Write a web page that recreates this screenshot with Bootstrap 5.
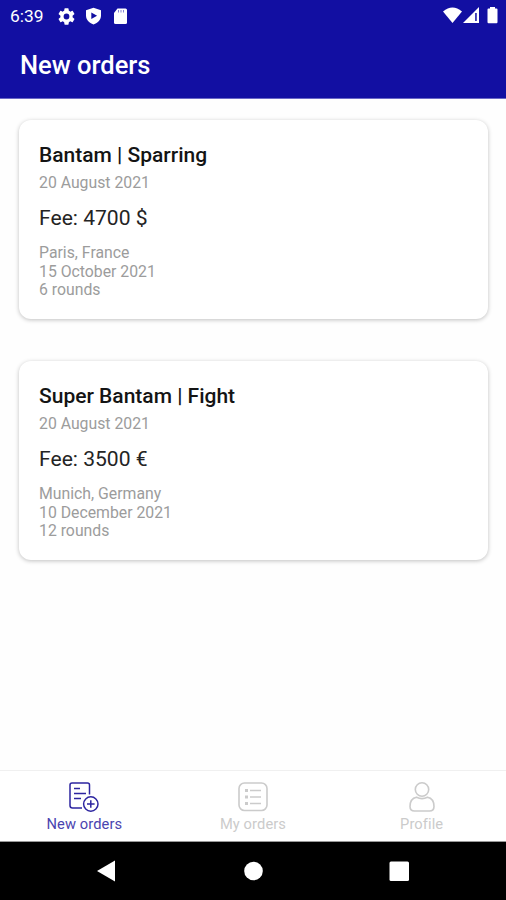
<!DOCTYPE html>
<html lang="en">
<head>
<meta charset="utf-8">
<meta name="viewport" content="width=device-width, initial-scale=1">
<title>New orders</title>
<link href="https://cdn.jsdelivr.net/npm/bootstrap@5.3.0/dist/css/bootstrap.min.css" rel="stylesheet">
<style>
body{font-family:Roboto,"Liberation Sans",sans-serif;background:#fefefe;color:#111}
.app-screen{height:900px}
.app-header{height:99px;background:#120fa2;border-bottom:1px solid #6a68c6}
.status-bar{height:32px;padding:0 8px 0 10px}
.clock{font-size:17.4px;line-height:32px;width:48px}
.app-title{font-size:25.5px;font-weight:500;line-height:30px;padding:18px 20px 0}
.order-list{padding:21px 18px 0 19px;gap:42px}
.order-card{height:199px;border:0;border-radius:12px;background:#fff;padding:23px 20px 0;box-shadow:0 1px 4px rgba(0,0,0,.25)}
.order-name{font-size:21px;font-weight:500;line-height:25px;color:#141414}
.order-meta{font-size:15.8px;line-height:18.8px;color:#9c9c9c}
.order-date{margin-top:5.5px}
.order-fee{font-size:21.1px;line-height:26px;margin:12.5px 0 13px;color:#242424}
.tab-bar{height:72px;border-top:1px solid #f0f0f0;border-bottom:1px solid #999}
.tab-link{padding-top:10px;color:#cbcbcb;font-size:14.7px;line-height:18px;letter-spacing:.1px}
.tab-link.active{color:#4b44b0}
.tab-link svg{margin-bottom:2px}
.system-nav{height:58px;background:#000}
</style>
</head>
<body>
<div class="app-screen d-flex flex-column overflow-hidden">
<header class="app-header text-white flex-shrink-0">
  <div class="status-bar d-flex align-items-center">
    <span class="clock">6:39</span>
    <svg width="17" height="17" viewBox="2 2 20 20" fill="#fff"><path d="M19.14 12.94c.04-.3.06-.61.06-.94s-.02-.64-.07-.94l2.03-1.58a.5.5 0 0 0 .12-.61l-1.92-3.32a.5.5 0 0 0-.59-.22l-2.39.96a7 7 0 0 0-1.62-.94l-.36-2.54A.5.5 0 0 0 13.92 2.4h-3.84a.5.5 0 0 0-.47.41l-.36 2.54a7 7 0 0 0-1.63.94l-2.39-.96a.5.5 0 0 0-.59.22L2.74 8.87a.5.5 0 0 0 .12.61l2.03 1.58a7 7 0 0 0 0 1.88l-2.03 1.58a.5.5 0 0 0-.12.61l1.92 3.32c.12.22.37.29.59.22l2.39-.96c.5.38 1.03.7 1.62.94l.36 2.54c.05.24.24.41.48.41h3.84c.24 0 .44-.17.47-.41l.36-2.54a7 7 0 0 0 1.62-.94l2.39.96c.22.08.47 0 .59-.22l1.92-3.32a.5.5 0 0 0-.12-.61zM12 15.4a3.4 3.4 0 1 1 0-6.8 3.4 3.4 0 0 1 0 6.8"/></svg>
    <svg class="ms-2" width="20" height="18" viewBox="0 0 20 18"><path fill="#fff" d="M10.500.7l7.500 2.600v5.200c0 4.100-3 7.300-7.500 8.900-4.500-1.600-7.500-4.800-7.500-8.900V3.300z"/><path fill="#120fa2" d="M8.300 5.500l5.800 3.300-5.800 3.300z"/></svg>
    <svg class="ms-2" width="20" height="16" viewBox="2 0 20 16"><path fill="#fff" d="M8.500.5h8q1.500 0 1.500 1.500v12.500q0 1.500-1.500 1.500h-10Q5 16 5 14.500V5z"/><path stroke="#8583d4" stroke-width="1" d="M9.500 2v2.500M12 2v2.500M14.500 2v2.500"/></svg>
    <svg class="ms-auto" width="56" height="20" viewBox="442 6 56 20" fill="#fff"><path d="M443 11.500q9.500-8 19 0L452.500 23z"/><path fill-rule="evenodd" d="M479 7v16h-16zM475.200 13v8h1.500v-8z"/><path d="M490 7h5v1.500h1.500q1 0 1 1V22q0 1.200-1 1.200h-8q-1 0-1-1.200V9.500q0-1 1-1h1.500z"/></svg>
  </div>
  <h1 class="app-title m-0">New orders</h1>
</header>
<main class="order-list d-flex flex-column flex-grow-1">
  <article class="card order-card">
    <h2 class="order-name m-0">Bantam | Sparring</h2>
    <div class="order-meta order-date">20 August 2021</div>
    <div class="order-fee">Fee: 4700 $</div>
    <div class="order-meta">Paris, France</div>
    <div class="order-meta">15 October 2021</div>
    <div class="order-meta">6 rounds</div>
  </article>
  <article class="card order-card">
    <h2 class="order-name m-0">Super Bantam | Fight</h2>
    <div class="order-meta order-date">20 August 2021</div>
    <div class="order-fee">Fee: 3500 €</div>
    <div class="order-meta">Munich, Germany</div>
    <div class="order-meta">10 December 2021</div>
    <div class="order-meta">12 rounds</div>
  </article>
</main>
<nav class="tab-bar nav nav-fill flex-nowrap flex-shrink-0 bg-white">
  <a class="tab-link active col-4 d-flex flex-column align-items-center text-decoration-none" href="#">
    <svg width="32" height="32" viewBox="0 0 32 32" fill="none" stroke="#2d25a0" stroke-width="1.5"><path d="M14 27H4.500Q2 27 2 24.500V4Q2 2 4 2h15.500q2 0 2 2v9.500"/><path d="M6 7.500h6M6 12.500h12M6 17.500h7"/><circle cx="22.800" cy="23" r="7.200"/><path d="M22.800 19.200v7.600M19 23h7.600"/></svg>
    New orders</a>
  <a class="tab-link col-4 d-flex flex-column align-items-center text-decoration-none" href="#">
    <svg width="32" height="32" viewBox="0 0 32 32" fill="none" stroke="currentColor" stroke-width="1.6"><rect x="2" y="2" width="28" height="27.500" rx="5.500"/><path d="M13 9.500h11M13 16h11M13 22.500h11"/><path stroke-width="3" d="M8 9.500h3M8 16h3M8 22.500h3"/></svg>
    My orders</a>
  <a class="tab-link col-4 d-flex flex-column align-items-center text-decoration-none" href="#">
    <svg width="32" height="32" viewBox="0 0 32 32" fill="none" stroke="currentColor" stroke-width="1.6"><circle cx="16" cy="8.500" r="6.700"/><path d="M10.500 16.200C6 17 4 21 4 25.500q0 4.500 4.500 4.500h15Q28 30 28 25.500c0-4.500-2-8.500-6.500-9.300Q16 19 10.500 16.200z"/></svg>
    Profile</a>
</nav>
<footer class="system-nav flex-shrink-0">
  <svg class="d-block" width="506" height="58" viewBox="0 842 506 58" fill="#fff"><path d="M97 871l18-10.500v21z"/><circle cx="253.500" cy="871" r="9.300"/><rect x="389.500" y="861.500" width="19.500" height="19.500" rx="1.500"/></svg>
</footer>
</div>
<script src="https://cdn.jsdelivr.net/npm/bootstrap@5.3.0/dist/js/bootstrap.bundle.min.js"></script>
</body>
</html>
